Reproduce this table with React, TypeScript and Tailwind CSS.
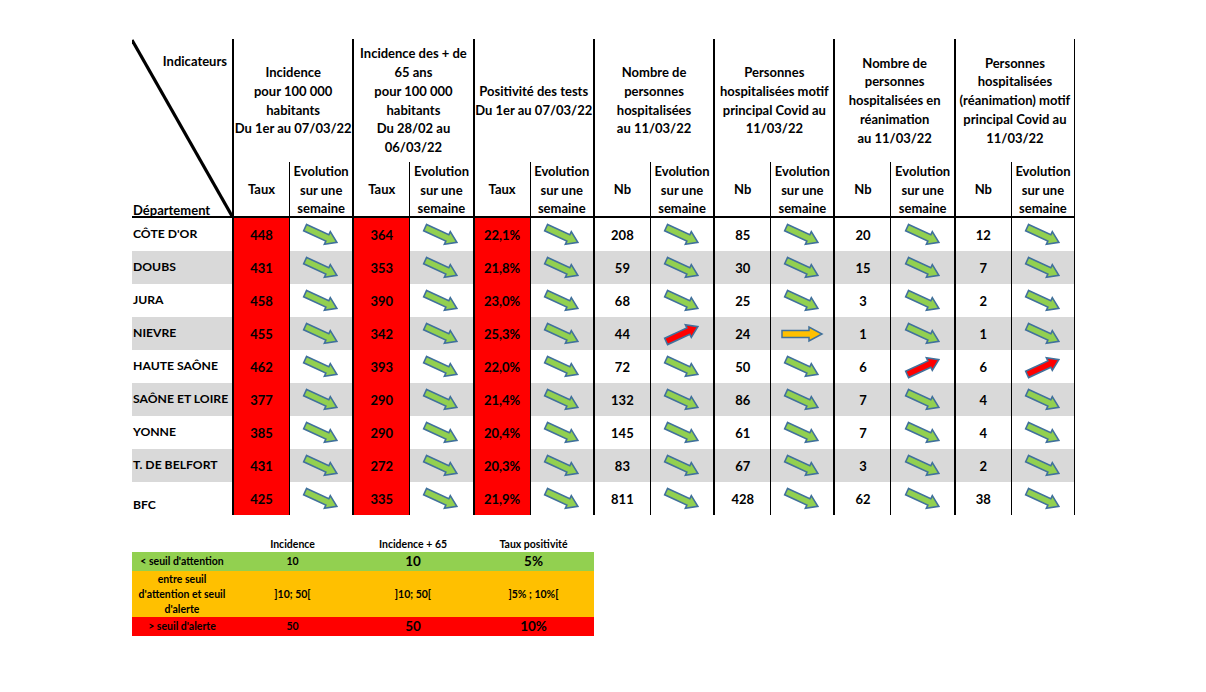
type Trend = "down" | "up" | "flat";

interface Row {
  name: string;
  values: string[];
  trends: Trend[];
  gray: boolean;
}

const groups: string[][] = [
  ["Incidence", "pour 100 000", "habitants", "Du 1er au 07/03/22"],
  ["Incidence des + de", "65 ans", "pour 100 000", "habitants", "Du 28/02 au", "06/03/22"],
  ["Positivité des tests", "Du 1er au 07/03/22"],
  ["Nombre de", "personnes", "hospitalisées", "au 11/03/22"],
  ["Personnes", "hospitalisées motif", "principal Covid au", "11/03/22"],
  ["Nombre de", "personnes", "hospitalisées en", "réanimation", "au 11/03/22"],
  ["Personnes", "hospitalisées", "(réanimation) motif", "principal Covid au", "11/03/22"],
];

const D: Trend = "down";

const rows: Row[] = [
  { name: "CÔTE D'OR", values: ["448", "364", "22,1%", "208", "85", "20", "12"], trends: [D, D, D, D, D, D, D], gray: false },
  { name: "DOUBS", values: ["431", "353", "21,8%", "59", "30", "15", "7"], trends: [D, D, D, D, D, D, D], gray: true },
  { name: "JURA", values: ["458", "390", "23,0%", "68", "25", "3", "2"], trends: [D, D, D, D, D, D, D], gray: false },
  { name: "NIEVRE", values: ["455", "342", "25,3%", "44", "24", "1", "1"], trends: [D, D, D, "up", "flat", D, D], gray: true },
  { name: "HAUTE SAÔNE", values: ["462", "393", "22,0%", "72", "50", "6", "6"], trends: [D, D, D, D, D, "up", "up"], gray: false },
  { name: "SAÔNE ET LOIRE", values: ["377", "290", "21,4%", "132", "86", "7", "4"], trends: [D, D, D, D, D, D, D], gray: true },
  { name: "YONNE", values: ["385", "290", "20,4%", "145", "61", "7", "4"], trends: [D, D, D, D, D, D, D], gray: false },
  { name: "T. DE BELFORT", values: ["431", "272", "20,3%", "83", "67", "3", "2"], trends: [D, D, D, D, D, D, D], gray: true },
  { name: "BFC", values: ["425", "335", "21,9%", "811", "428", "62", "38"], trends: [D, D, D, D, D, D, D], gray: false },
];

// block arrow, drawn horizontally then tilted
const Arrow = ({ trend }: { trend: Trend }) => {
  if (trend === "flat") {
    return (
      <svg width="44" height="30" viewBox="0 0 44 30">
        <path
          d="M2 11.5 H29 V8 L42 15 L29 22 V18.5 H2 Z"
          fill="#ffc000"
          stroke="#41719c"
          strokeWidth="1.5"
        />
      </svg>
    );
  }
  const fill = trend === "down" ? "#92d050" : "#ff0000";
  const rot = trend === "down" ? 25 : -25;
  return (
    <svg width="44" height="30" viewBox="0 0 44 30">
      <g transform={`rotate(${rot} 22 15)`}>
        <path
          d="M4.5 11.5 H29 V8 L39.5 15 L29 22 V18.5 H4.5 Z"
          fill={fill}
          stroke="#41719c"
          strokeWidth="1.6"
        />
      </g>
    </svg>
  );
};

const Legend = () => {
  return (
    <div className="mt-[22px] grid w-fit grid-cols-[100px_121px_120px_121px] text-[10.5px] font-bold leading-[15px]">
      {/* header */}
      <div className="h-[15px]" />
      <div className="flex items-center justify-center">Incidence</div>
      <div className="flex items-center justify-center">Incidence + 65</div>
      <div className="flex items-center justify-center">Taux positivité</div>

      {/* green */}
      <div className="flex h-[19px] items-center justify-center bg-[#92d050]">&lt; seuil d'attention</div>
      <div className="flex items-center justify-center bg-[#92d050]">10</div>
      <div className="flex items-center justify-center bg-[#92d050] text-[13.5px]">10</div>
      <div className="flex items-center justify-center bg-[#92d050] text-[13.5px]">5%</div>

      {/* orange */}
      <div className="flex h-[46px] flex-col items-center justify-center bg-[#ffc000] text-center">
        <span>entre seuil</span>
        <span>d'attention et seuil</span>
        <span>d'alerte</span>
      </div>
      <div className="flex items-center justify-center bg-[#ffc000]">]10; 50[</div>
      <div className="flex items-center justify-center bg-[#ffc000]">]10; 50[</div>
      <div className="flex items-center justify-center bg-[#ffc000]">]5% ; 10%[</div>

      {/* red */}
      <div className="flex h-[19px] items-center justify-center bg-[#ff0000]">&gt; seuil d'alerte</div>
      <div className="flex items-center justify-center bg-[#ff0000]">50</div>
      <div className="flex items-center justify-center bg-[#ff0000] text-[13.5px]">50</div>
      <div className="flex items-center justify-center bg-[#ff0000] text-[13.5px]">10%</div>
    </div>
  );
};

export default function App() {
  return (
    <div className="min-h-[692px] bg-white pl-[132px] pt-[39px] font-['Lato','Liberation_Sans',sans-serif] text-black">
      <div className="w-fit border-r border-black">
        <div className="grid grid-cols-[100px_repeat(7,57px_63.3px)] grid-rows-[123px_56px_repeat(9,33px)] text-[13px] font-bold leading-[18.7px]">
          {/* corner cell with the diagonal */}
          <div className="relative row-span-2 flex flex-col justify-between border-b-2 border-black">
            <svg className="absolute inset-0 h-full w-full" viewBox="0 0 100 179" preserveAspectRatio="none">
              <line x1="0" y1="1" x2="100" y2="179" stroke="black" strokeWidth="3.2" />
            </svg>
            <div className="relative pr-[5px] pt-[13px] text-right">Indicateurs</div>
            <div className="relative -mb-[4px] pl-[1px]">Département</div>
          </div>

          {groups.map((lines, g) => (
            <div
              key={`g${g}`}
              className="col-span-2 flex flex-col items-center justify-center border-l-2 border-black text-center"
            >
              {lines.map((l) => (
                <span key={l} className="whitespace-nowrap">
                  {l}
                </span>
              ))}
            </div>
          ))}

          {groups.map((_, g) => {
            const label = g < 3 ? "Taux" : "Nb";
            return [
              <div key={`t${g}`} className="flex items-center justify-center border-b-2 border-l-2 border-black">
                {label}
              </div>,
              <div
                key={`e${g}`}
                className="flex flex-col items-center justify-center border-b-2 border-l border-black pt-[2px] text-center"
              >
                <span>Evolution</span>
                <span>sur une</span>
                <span>semaine</span>
              </div>,
            ];
          })}

          {rows.map((row, r) => {
            const bg = row.gray ? "bg-[#d9d9d9]" : "bg-white";
            const isLast = r === rows.length - 1;
            return [
              <div
                key={`n${r}`}
                className={`flex whitespace-nowrap pl-[1px] text-[12.2px] ${isLast ? "items-end pb-[0px]" : "items-center"} ${bg}`}
              >
                {row.name}
              </div>,
              ...row.values.map((v, g) => [
                <div
                  key={`v${r}-${g}`}
                  className={`flex items-center justify-center border-l-2 border-black pt-[1px] ${g < 3 ? "bg-[#ff0000]" : bg}`}
                >
                  {v}
                </div>,
                <div key={`a${r}-${g}`} className={`flex items-center justify-center border-l border-black ${bg}`}>
                  <Arrow trend={row.trends[g]} />
                </div>,
              ]),
            ];
          })}
        </div>
      </div>

      <Legend />
    </div>
  );
}
